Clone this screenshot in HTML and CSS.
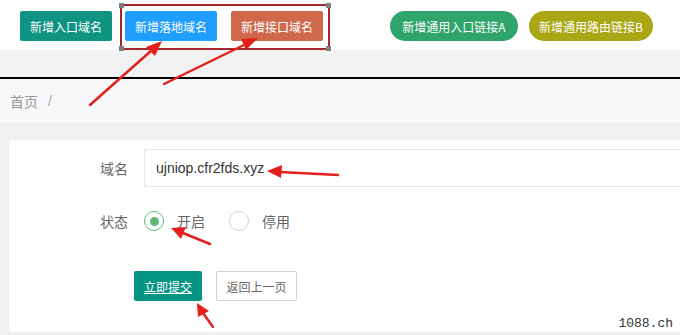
FILE: index.html
```html
<!DOCTYPE html>
<html lang="zh">
<head>
<meta charset="utf-8">
<link rel="stylesheet" href="styles.css">
</head>
<body>
<div class="page">
  <header class="topbar">
    <div class="btn-group">
      <a class="btn btn-teal">新增入口域名</a>
      <a class="btn btn-blue">新增落地域名</a>
      <a class="btn btn-orange">新增接口域名</a>
    </div>
    <div class="pill-group">
      <a class="pill pill-green">新增通用入口链接A</a>
      <a class="pill pill-olive">新增通用路由链接B</a>
    </div>
  </header>
  <div class="band"></div>
  <div class="crumbs"><span>首页</span><span class="sep">/</span></div>
  <main class="content">
    <section class="card">
      <div class="row">
        <label class="label">域名</label>
        <div class="input">ujniop.cfr2fds.xyz</div>
      </div>
      <div class="row row-radio">
        <label class="label">状态</label>
        <div class="radio checked"><i class="dot"></i><span>开启</span></div>
        <div class="radio"><i class="dot"></i><span>停用</span></div>
      </div>
      <div class="row row-actions">
        <a class="submit">立即提交</a>
        <a class="back">返回上一页</a>
      </div>
    </section>
  </main>
  <div class="watermark">1088.ch</div>
  <svg class="annot" width="680" height="335" viewBox="0 0 680 335">
    <rect x="121" y="5" width="208" height="44" fill="none" stroke="#a3282c" stroke-width="2"/>
    <rect x="119" y="3" width="5" height="5" fill="#7d7d7d"/>
    <rect x="326" y="3" width="5" height="5" fill="#7d7d7d"/>
    <rect x="119" y="46" width="5" height="5" fill="#7d7d7d"/>
    <rect x="326" y="46" width="5" height="5" fill="#7d7d7d"/>
    <g stroke="#e3201b" stroke-width="2.5" stroke-linecap="round" fill="#e3201b">
      <line x1="90" y1="105" x2="152" y2="50"/>
      <polygon stroke="none" points="162,41 146,47 155,56"/>
      <line x1="164" y1="84" x2="246" y2="44"/>
      <polygon stroke="none" points="258,38 241,39 246,50"/>
      <line x1="338" y1="175" x2="280" y2="172"/>
      <polygon stroke="none" points="267,171 282,165 281,178"/>
      <line x1="210" y1="244" x2="183" y2="233"/>
      <polygon stroke="none" points="171,228 186,227 181,239"/>
      <line x1="213" y1="327" x2="203" y2="313"/>
      <polygon stroke="none" points="197,303 209,311 198,317"/>
    </g>
  </svg>
</div>
</body>
</html>
```
FILE: styles.css
```css
* { box-sizing: border-box; margin: 0; padding: 0; }
html, body { width: 680px; height: 335px; overflow: hidden; }
body {
  background: #f0f0f0;
  font-family: "Noto Sans CJK SC", "Liberation Sans", sans-serif;
  font-size: 14px;
  color: #666;
}
.page { position: relative; width: 680px; height: 335px; overflow: hidden; }

.topbar {
  height: 50px;
  background: #fff;
  display: flex;
  align-items: flex-start;
  padding: 11px 27px 0 20px;
}
.btn-group { display: flex; gap: 13px; }
.btn {
  display: flex; align-items: center; justify-content: center;
  width: 92px; height: 30px;
  border-radius: 2px;
  color: #fff;
  font-size: 12px;
  white-space: nowrap;
}
.btn-orange { margin-left: 1px; }
.btn-teal { background: #0f9484; }
.btn-blue { background: #1e9fff; }
.btn-orange { background: #d0694c; }

.pill-group { display: flex; gap: 11px; margin-left: auto; }
.pill {
  display: flex; align-items: center; justify-content: center;
  height: 30px;
  border-radius: 15px;
  color: #fff;
  font-size: 12px;
  white-space: nowrap;
}
.pill-green { width: 128px; background: #2fa56b; }
.pill-olive { width: 124px; background: #aaa716; }

.band {
  height: 29px;
  background: #f2f2f2;
  border-bottom: 2px solid #000;
}
.crumbs {
  height: 44px;
  background: #f7f8fa;
  display: flex; align-items: center; gap: 10px;
  padding-left: 10px;
  color: #999;
  font-size: 14px;
}
.crumbs .sep { color: #aaa; font-family: "Liberation Sans", sans-serif; }

.content { padding: 17px 0 0 9px; }
.card {
  background: #fff;
  height: 192px;
  overflow: hidden;
  padding-top: 9px;
}
.row { display: flex; align-items: center; }
.label {
  flex: 0 0 135px;
  text-align: right;
  padding-right: 16px;
  color: #666;
}
.input {
  flex: 0 0 600px;
  height: 38px;
  border: 1px solid #e6e6e6;
  border-right: none;
  padding-left: 11px;
  display: flex; align-items: center;
  font-family: "Liberation Sans", sans-serif;
  font-size: 14px;
  color: #333;
}
.row-radio { margin-top: 15px; height: 38px; }
.radio { display: flex; align-items: center; margin-right: 24px; color: #666; }
.radio .dot {
  width: 20px; height: 20px;
  border-radius: 50%;
  border: 1.5px solid #d2d2d2;
  margin-right: 13px;
  display: flex; align-items: center; justify-content: center;
}
.radio.checked .dot { border-color: #5fb878; }
.radio.checked .dot::after {
  content: "";
  width: 9px; height: 9px;
  border-radius: 50%;
  background: #5fb878;
}
.row-actions { margin-top: 31px; padding-left: 125px; gap: 14px; }
.submit {
  display: flex; align-items: center; justify-content: center;
  width: 68px; height: 30px;
  background: #069485;
  border-radius: 2px;
  color: #fff;
  font-size: 12px;
  text-decoration: underline;
}
.back {
  display: flex; align-items: center; justify-content: center;
  width: 81px; height: 30px;
  border: 1px solid #d2d2d2;
  border-radius: 2px;
  background: #fff;
  color: #666;
  font-size: 12px;
}

.watermark {
  position: absolute;
  right: 6px; bottom: 4px;
  background: #fff;
  font-family: "Liberation Mono", monospace;
  font-size: 13px;
  line-height: 14px;
  color: #333;
  padding: 0 1px;
}
.annot { position: absolute; left: 0; top: 0; pointer-events: none; }
```
